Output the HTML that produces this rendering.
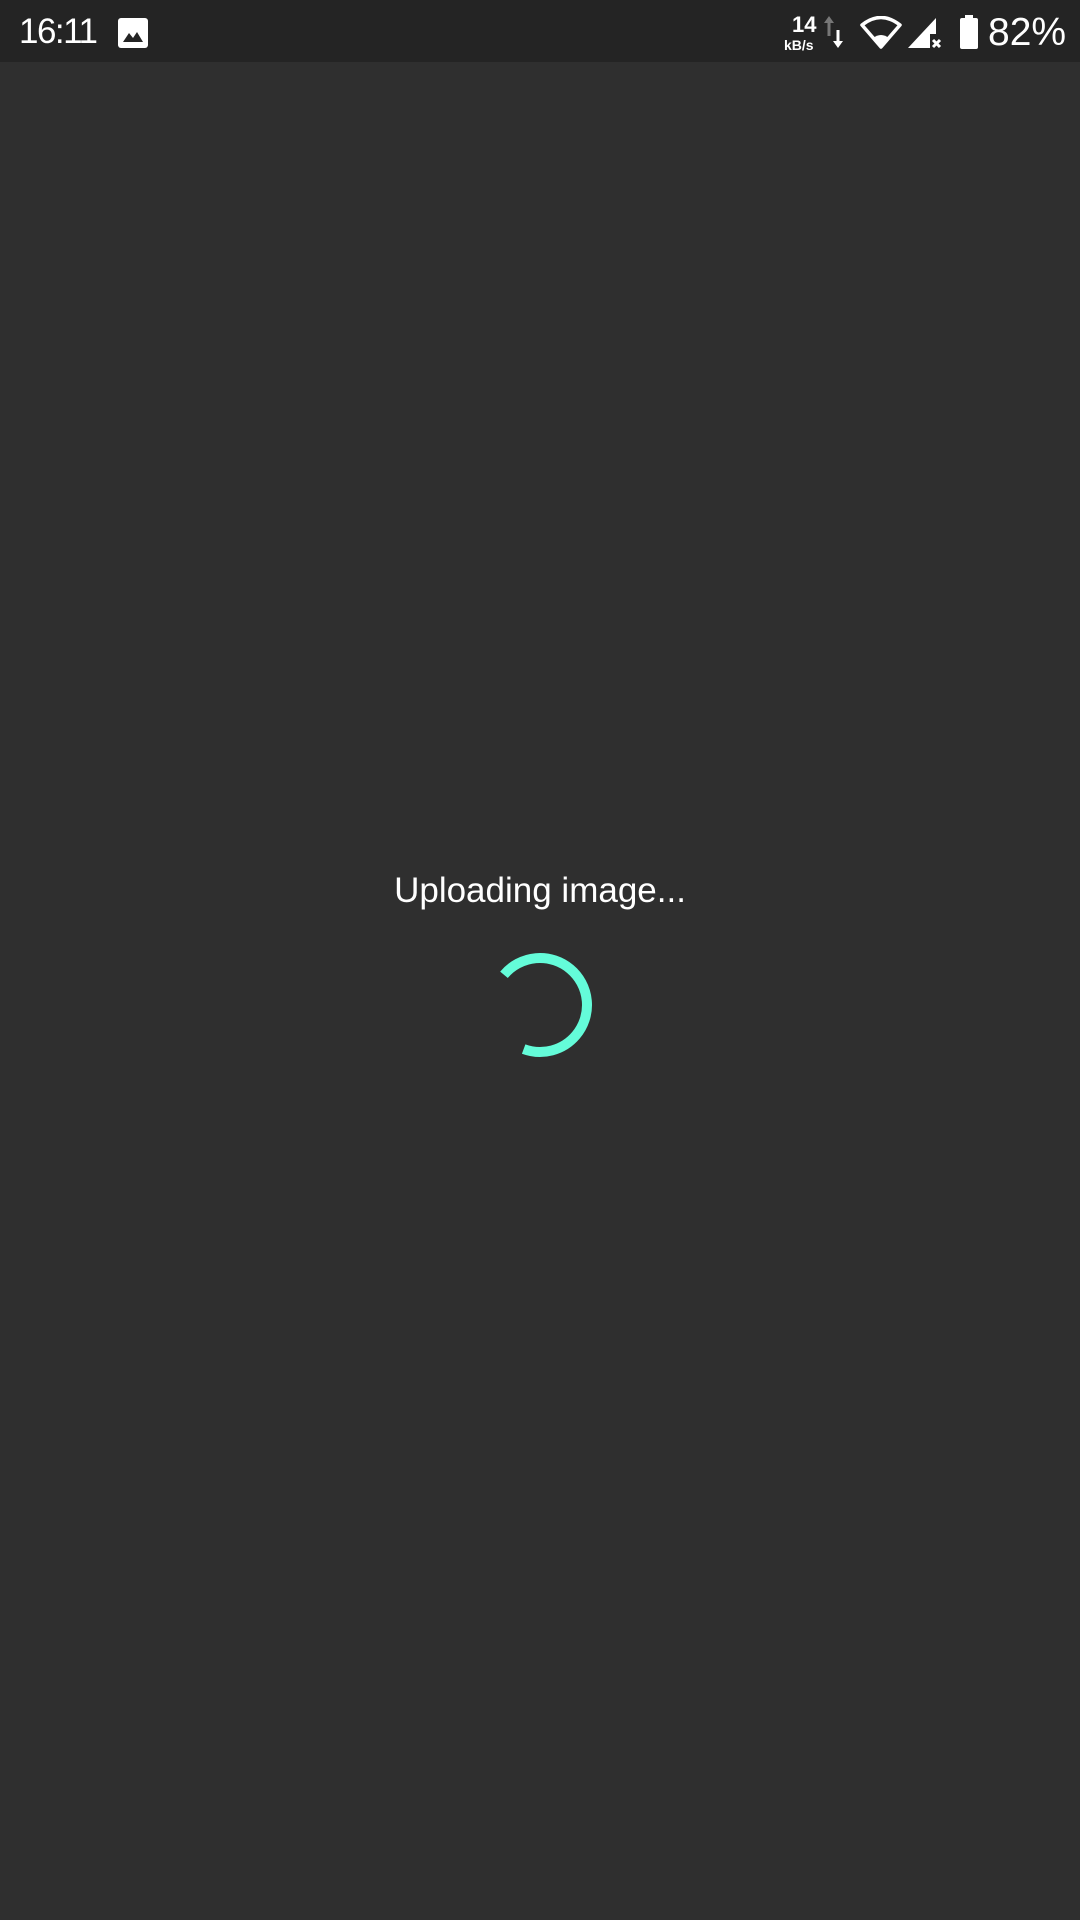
<!DOCTYPE html>
<html><head><meta charset="utf-8"><style>
html,body{margin:0;padding:0;}
body{width:1080px;height:1920px;background:#2f2f2f;position:relative;overflow:hidden;font-family:"Liberation Sans",sans-serif;color:#fff;}
.sb{position:absolute;left:0;top:0;width:1080px;height:62px;background:#242424;}
.t{position:absolute;white-space:nowrap;}
</style></head><body>
<div class="sb">
<div class="t" style="left:19px;top:12px;font-size:35px;letter-spacing:-1.5px;">16:11</div>
<svg style="position:absolute;left:118px;top:18px" width="30" height="30" viewBox="0 0 30 30"><rect x="0" y="0" width="30" height="30" rx="3" fill="#fff"/><path d="M5 24 L11 15 L15 20 L19 14 L25 24 Z" fill="#242424"/></svg>
<div class="t" style="left:792px;top:12px;font-size:22px;font-weight:bold;">14</div>
<div class="t" style="left:784px;top:37px;font-size:14px;font-weight:bold;">kB/s</div>
<svg style="position:absolute;left:822px;top:14px" width="24" height="36" viewBox="0 0 24 36"><path d="M7 2 L2 9 H5.5 V22 H8.5 V9 H12 Z" fill="#777"/><path d="M16 34 L11 27 H14.5 V16 H17.5 V27 H21 Z" fill="#fff"/></svg>
<svg style="position:absolute;left:860px;top:16px" width="42" height="34" viewBox="0 0 42 34"><path d="M21 31 L2 9 Q21 -6 40 9 Z" fill="none" stroke="#fff" stroke-width="3.5" stroke-linejoin="round"/><path d="M21 31 L13 22 Q21 16 29 22 Z" fill="#fff"/></svg>
<svg style="position:absolute;left:906px;top:16px" width="36" height="34" viewBox="0 0 36 34"><path d="M2 32 L30 2 V18 H24 V32 Z" fill="#fff"/><path d="M27 24 L34 31 M34 24 L27 31" stroke="#fff" stroke-width="3"/></svg>
<svg style="position:absolute;left:959px;top:15px" width="20" height="35" viewBox="0 0 20 35"><rect x="6" y="0" width="8" height="4" fill="#fff"/><rect x="1" y="3" width="18" height="31" rx="2" fill="#fff"/></svg>
<div class="t" style="left:988px;top:11px;font-size:39px;">82%</div>
</div>
<div class="t" style="left:0;width:1080px;text-align:center;top:871px;font-size:35px;">Uploading image...</div>
<svg style="position:absolute;left:480px;top:945px" width="120" height="120" viewBox="0 0 120 120">
<circle cx="60" cy="60" r="47" fill="none" stroke="#64fcd9" stroke-width="10" stroke-dasharray="205 400" transform="rotate(220 60 60)"/>
</svg>
</body></html>
